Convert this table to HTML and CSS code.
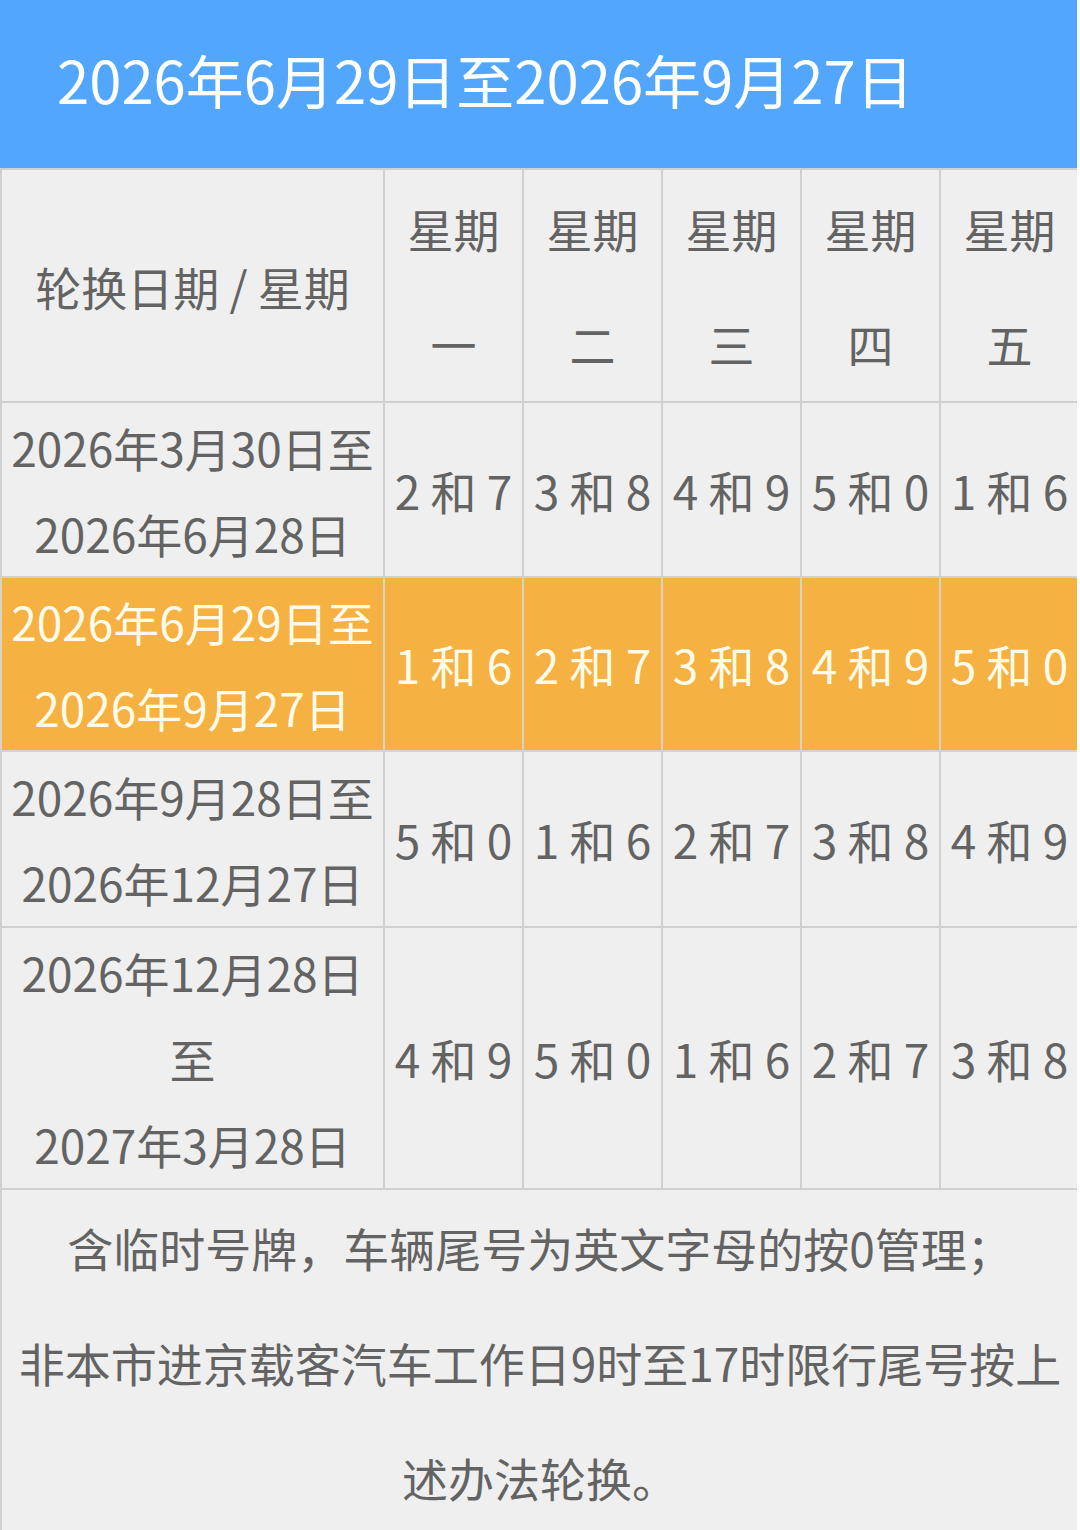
FILE: index.html
```html
<!DOCTYPE html>
<html lang="zh-CN">
<head>
<meta charset="utf-8">
<title>尾号限行轮换</title>
<link rel="stylesheet" href="styles.css">
</head>
<body>
<div class="page">
  <header class="banner">
    <h1 class="banner-title">2026年6月29日至2026年9月27日</h1>
  </header>
  <table class="rota">
    <colgroup>
      <col class="col-date">
      <col class="col-day"><col class="col-day"><col class="col-day"><col class="col-day"><col class="col-day">
    </colgroup>
    <thead>
      <tr class="head-row">
        <th class="date-head">轮换日期 / 星期</th>
        <th>星期一</th>
        <th>星期二</th>
        <th>星期三</th>
        <th>星期四</th>
        <th>星期五</th>
      </tr>
    </thead>
    <tbody>
      <tr>
        <td class="date">2026年3月30日至<br>2026年6月28日</td>
        <td class="num">2 和 7</td>
        <td class="num">3 和 8</td>
        <td class="num">4 和 9</td>
        <td class="num">5 和 0</td>
        <td class="num">1 和 6</td>
      </tr>
      <tr class="current">
        <td class="date">2026年6月29日至<br>2026年9月27日</td>
        <td class="num">1 和 6</td>
        <td class="num">2 和 7</td>
        <td class="num">3 和 8</td>
        <td class="num">4 和 9</td>
        <td class="num">5 和 0</td>
      </tr>
      <tr>
        <td class="date">2026年9月28日至<br>2026年12月27日</td>
        <td class="num">5 和 0</td>
        <td class="num">1 和 6</td>
        <td class="num">2 和 7</td>
        <td class="num">3 和 8</td>
        <td class="num">4 和 9</td>
      </tr>
      <tr>
        <td class="date">2026年12月28日<br>至<br>2027年3月28日</td>
        <td class="num">4 和 9</td>
        <td class="num">5 和 0</td>
        <td class="num">1 和 6</td>
        <td class="num">2 和 7</td>
        <td class="num">3 和 8</td>
      </tr>
      <tr class="note-row">
        <td class="note" colspan="6">含临时号牌，车辆尾号为英文字母的按0管理；<br>非本市进京载客汽车工作日9时至17时限行尾号按上述办法轮换。</td>
      </tr>
    </tbody>
  </table>
</div>
</body>
</html>
```

FILE: styles.css
```css
html, body {
  margin: 0;
  padding: 0;
  background: #ffffff;
}

body {
  font-family: "Noto Sans CJK SC", "Noto Sans", sans-serif;
  color: #636363;
}

.page {
  width: 1077px;
  overflow: hidden;
}

.banner {
  height: 168px;
  background: #52a6fc;
  display: flex;
  align-items: center;
  padding-left: 57px;
  box-sizing: border-box;
}

.banner-title {
  margin: 0;
  font-size: 58px;
  font-weight: 400;
  color: #ffffff;
  line-height: 1;
  padding-bottom: 10px;
  letter-spacing: 0;
}

.rota {
  width: 1077px;
  border-collapse: collapse;
  table-layout: fixed;
  background: #efefef;
}

.col-date {
  width: 383px;
}

.col-day {
  width: 139px;
}

.rota th,
.rota td {
  border: 2px solid #d0d0d0;
  font-size: 46px;
  font-weight: 400;
  color: #636363;
  text-align: center;
  vertical-align: middle;
  padding: 0 2px;
}

.head-row th {
  line-height: 115px;
  height: 231px;
  padding: 0 4px;
}

.head-row th.date-head {
  line-height: 60px;
}

.rota td {
  line-height: 86px;
}

.rota td.num {
  white-space: nowrap;
  padding: 0;
}

.rota tbody tr:nth-child(1) td { height: 173px; }
.rota tbody tr:nth-child(2) td { height: 172px; }
.rota tbody tr:nth-child(3) td { height: 174px; }
.rota tbody tr:nth-child(4) td { height: 260px; }

.current td {
  background: #f5b142;
  color: #fffbea;
  border-color: #d9d3c6;
}

.note {
  line-height: 115px !important;
  padding: 0 10px !important;
  vertical-align: top !important;
  height: 345px;
}
```
